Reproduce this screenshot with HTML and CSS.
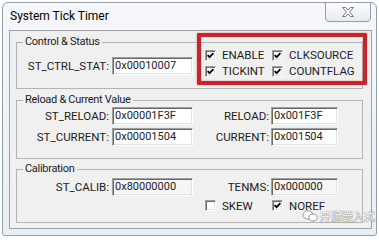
FILE: index.html
```html
<!DOCTYPE html>
<html>
	<head>
		<meta charset="UTF-8">
		<title>System Tick Timer</title>
		<link rel="stylesheet" href="styles.css">
	</head>
	<body>
		<div class="window">
			<div class="titlebar">
				<span class="title">System Tick Timer</span>
				<span class="close">
					<svg width="14" height="10" viewBox="0 0 14 10"><path d="M1.5 0.5h3l2.5 2.6 2.5-2.6h3l-4 4.5 4 4.5h-3l-2.5-2.6-2.5 2.6h-3l4-4.5z" fill="#fff" stroke="#6f7680"/></svg>
				</span>
			</div>
			<div class="client">
				<fieldset class="group g1">
					<legend>Control &amp; Status</legend>
					<div class="row">
						<div class="field">
							<span class="lbl">ST_CTRL_STAT:</span>
							<span class="edit">0x00010007</span>
						</div>
						<div class="checks">
							<span class="chk"><i class="box"><svg width="9" height="9" viewBox="0 0 9 9"><path d="M1.6 4.2l2 2 3.8-4" fill="none" stroke="#000" stroke-width="1.8"/></svg></i>ENABLE</span>
							<span class="chk"><i class="box"><svg width="9" height="9" viewBox="0 0 9 9"><path d="M1.6 4.2l2 2 3.8-4" fill="none" stroke="#000" stroke-width="1.8"/></svg></i>CLKSOURCE</span>
							<span class="chk"><i class="box"><svg width="9" height="9" viewBox="0 0 9 9"><path d="M1.6 4.2l2 2 3.8-4" fill="none" stroke="#000" stroke-width="1.8"/></svg></i>TICKINT</span>
							<span class="chk"><i class="box"><svg width="9" height="9" viewBox="0 0 9 9"><path d="M1.6 4.2l2 2 3.8-4" fill="none" stroke="#000" stroke-width="1.8"/></svg></i>COUNTFLAG</span>
						</div>
					</div>
				</fieldset>
				<fieldset class="group g2">
					<legend>Reload &amp; Current Value</legend>
					<div class="field first">
						<span class="lbl">ST_RELOAD:</span>
						<span class="edit">0x00001F3F</span>
						<span class="lbl lbl2">RELOAD:</span>
						<span class="edit edit2">0x001F3F</span>
					</div>
					<div class="field">
						<span class="lbl">ST_CURRENT:</span>
						<span class="edit">0x00001504</span>
						<span class="lbl lbl2">CURRENT:</span>
						<span class="edit edit2">0x001504</span>
					</div>
				</fieldset>
				<fieldset class="group g3">
					<legend>Calibration</legend>
					<div class="field first">
						<span class="lbl">ST_CALIB:</span>
						<span class="edit ro">0x80000000</span>
						<span class="lbl lbl2">TENMS:</span>
						<span class="edit edit2 ro">0x000000</span>
					</div>
					<div class="checks flags">
						<span class="chk"><i class="box"></i>SKEW</span>
						<span class="chk"><i class="box"><svg width="9" height="9" viewBox="0 0 9 9"><path d="M1.6 4.2l2 2 3.8-4" fill="none" stroke="#000" stroke-width="1.8"/></svg></i>NOREF</span>
					</div>
				</fieldset>
			</div>
			<!-- 红框标注 -->
			<div class="mark"></div>
			<div class="watermark">
				<svg width="16" height="12" viewBox="0 0 16 12"><ellipse cx="6" cy="5" rx="5" ry="4.2" fill="#fff" stroke="#9a9a9a"/><ellipse cx="11" cy="7.5" rx="4.2" ry="3.5" fill="#fff" stroke="#9a9a9a"/></svg>
				<span>开源嵌入式</span>
			</div>
		</div>
	</body>
</html>
```

FILE: styles.css
```css
*{
	margin: 0;
	padding: 0;
	box-sizing: border-box;
}
body{
	background: #fff;
	font-family: Roboto, "Liberation Sans", sans-serif;
	font-size: 11.5px;
	color: #1c1c1c;
}
.window{
	position: relative;
	width: 375px;
	height: 234px;
	margin: 2px 0 0 2px;
	border: 1px solid #939eaa;
	border-radius: 6px 6px 3px 3px;
	background: linear-gradient(#f5f7fa, #e8eef5);
	display: flex;
	flex-direction: column;
}
.titlebar{
	height: 27px;
	display: flex;
	justify-content: space-between;
	align-items: flex-start;
}
.title{
	font-size: 12px;
	line-height: 27px;
	padding-left: 7px;
	color: #000;
}
.close{
	width: 46px;
	height: 20px;
	margin: -1px 5px 0 0;
	border: 1px solid #939eaa;
	border-radius: 0 0 4px 4px;
	background: linear-gradient(#fbfcfd, #e6ebf0);
	display: flex;
	align-items: center;
	justify-content: center;
}
.client{
	flex: 1;
	margin: 0 4px 6px 6px;
	border: 1px solid #99a2ac;
	background: #f0f0f0;
	padding: 5px 8px 4px 6px;
}
.group{
	border: 1px solid #b4b4b4;
	padding: 0;
	min-width: 0;
}
.group legend{
	margin-left: 6px;
	padding: 0 2px;
	font-size: 11px;
	line-height: 12px;
	letter-spacing: -0.3px;
}
.g1{
	height: 53px;
}
.g2{
	height: 65px;
	margin-top: 5px;
}
.g3{
	height: 60px;
	margin-top: 4px;
}
.row{
	display: flex;
	align-items: flex-start;
}
.field{
	display: flex;
	margin-top: 3px;
}
.g1 .field{
	margin-top: 9px;
}
.g2 .first{
	margin-top: 1px;
}
.lbl{
	width: 93px;
	text-align: right;
	line-height: 18px;
	padding-right: 1px;
}
.lbl2{
	width: 77px;
}
.edit{
	width: 81px;
	height: 18px;
	margin-left: 2px;
	padding-left: 2px;
	font-size: 11px;
	line-height: 16px;
	background: #fff;
	border: 1px solid;
	border-color: #a0a0a0 #fff #fff #a0a0a0;
	box-shadow: inset 1px 1px 0 #696969, inset -1px -1px 0 #e3e3e3;
}
.edit2{
	width: 67px;
	margin-left: 1px;
}
.ro{
	background: #f6f6f6;
}
.checks{
	display: grid;
	grid-template-columns: 67px auto;
	grid-auto-rows: 16px;
	margin: -1px 0 0 12px;
}
.flags{
	grid-auto-rows: 13px;
	margin: 3px 0 0 188px;
}
.chk{
	display: flex;
	align-items: center;
	white-space: nowrap;
}
.box{
	width: 11px;
	height: 11px;
	margin-right: 6px;
	background: #fff;
	border: 1px solid;
	border-color: #a0a0a0 #fff #fff #a0a0a0;
	box-shadow: inset 1px 1px 0 #696969, inset -1px -1px 0 #e3e3e3;
	display: flex;
	align-items: center;
	justify-content: center;
}
.mark{
	position: absolute;
	left: 194px;
	top: 30px;
	width: 170px;
	height: 52px;
	border: 4px solid #c1272d;
	border-radius: 1px;
	box-shadow: 0 0 2px rgba(150, 0, 0, 0.5), inset 0 0 2px rgba(150, 0, 0, 0.4);
}
.watermark{
	position: absolute;
	left: 299px;
	top: 205px;
	display: flex;
	align-items: center;
	gap: 2px;
	font-family: "Noto Sans CJK SC", sans-serif;
	font-size: 11px;
	color: #fff;
	text-shadow: 0 0 1px #666, 0 0 1px #666;
}
```
